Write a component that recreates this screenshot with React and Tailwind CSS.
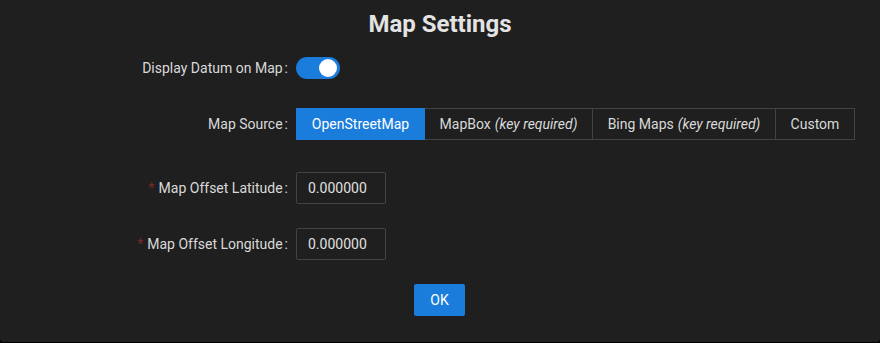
import React from "react";

function Label({ children, required }) {
  return (
    <div className="w-[296px] shrink-0 flex justify-end items-center pr-[8px] text-[14px] text-[#d9d9d9]">
      {required && <span className="text-[#7a2a2a] mr-[4px] text-[14px]">*</span>}
      <span>{children}</span>
      <span className="ml-[2px]">:</span>
    </div>
  );
}

export default function App() {
  const font = { fontFamily: "Roboto, 'Liberation Sans', sans-serif" };
  const segs = [
    { main: "OpenStreetMap", active: true, w: "w-[129px]" },
    { main: "MapBox", note: "(key required)", w: "w-[168px]" },
    { main: "Bing Maps", note: "(key required)", w: "w-[183px]" },
    { main: "Custom", w: "w-[79px]" },
  ];
  return (
    <div className="w-[880px] h-[343px] bg-black" style={font}>
      <div className="h-[342px] bg-[#1f1f1f] rounded-b-[4px] flex flex-col">
        <div className="h-[48px] flex items-center justify-center text-[24px] font-bold text-[#e3e3e3]">
          Map Settings
        </div>
        <div className="mt-[9px] flex items-center h-[22px]">
          <Label>Display Datum on Map</Label>
          <div className="w-[44px] h-[22px] rounded-full bg-[#1a7cdb] relative">
            <div className="absolute right-[3px] top-[2px] w-[18px] h-[18px] rounded-full bg-white" />
          </div>
        </div>
        <div className="mt-[29px] flex items-center h-[32px]">
          <Label>Map Source</Label>
          <div className="flex h-[32px]">
            {segs.map((s, i) => (
              <div
                key={i}
                className={
                  s.w +
                  " h-[32px] flex items-center justify-center text-[14px] border-y border-r " +
                  (i === 0 ? "border-l " : "") +
                  (s.active
                    ? "bg-[#1a7cdb] border-[#1a7cdb] text-white"
                    : "border-[#434343] text-[#d9d9d9]")
                }
              >
                <span>{s.main}</span>
                {s.note && <span className="italic ml-[4px]">{s.note}</span>}
              </div>
            ))}
          </div>
        </div>
        <div className="mt-[32px] flex items-center h-[32px]">
          <Label required>Map Offset Latitude</Label>
          <div className="w-[90px] h-[32px] border border-[#434343] rounded-[2px] flex items-center pl-[11px] text-[14px] text-[#e0e0e0]">
            0.000000
          </div>
        </div>
        <div className="mt-[24px] flex items-center h-[32px]">
          <Label required>Map Offset Longitude</Label>
          <div className="w-[90px] h-[32px] border border-[#434343] rounded-[2px] flex items-center pl-[11px] text-[14px] text-[#e0e0e0]">
            0.000000
          </div>
        </div>
        <div className="mt-[24px] flex justify-center">
          <div className="ml-[-1px] w-[51px] h-[32px] bg-[#1a7cdb] rounded-[2px] flex items-center justify-center text-[14px] text-white">
            OK
          </div>
        </div>
      </div>
    </div>
  );
}
